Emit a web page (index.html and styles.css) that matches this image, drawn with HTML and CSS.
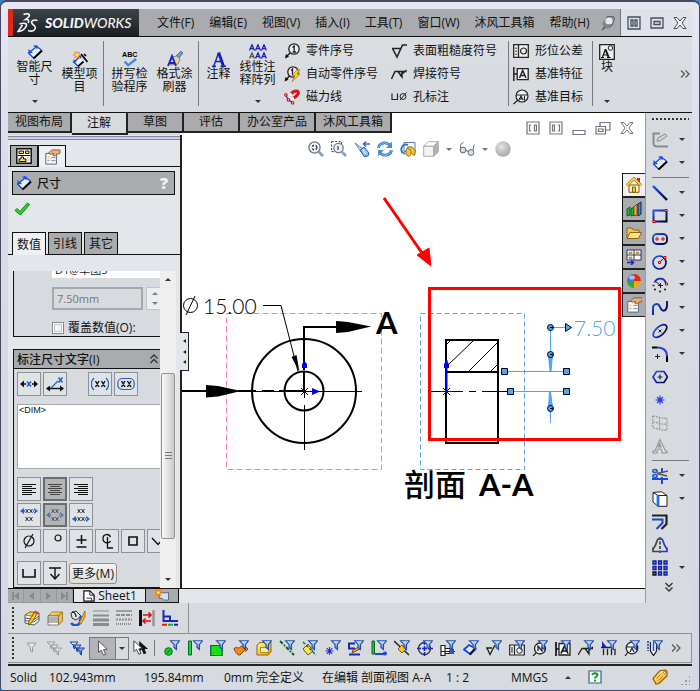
FILE: index.html
```html
<!DOCTYPE html>
<html lang="zh-CN">
<head>
<meta charset="utf-8">
<title>SOLIDWORKS - Sheet1</title>
<link rel="stylesheet" href="styles.css">
</head>
<body>
<svg class="sprite" aria-hidden="true">
  <defs>
    <linearGradient id="gold" x1="0" y1="0" x2="1" y2="1"><stop offset="0" stop-color="#fff3a0"/><stop offset="1" stop-color="#e3a21a"/></linearGradient>
    <linearGradient id="funnelFill" x1="0" y1="0" x2="0" y2="1"><stop offset="0" stop-color="#dff0ff"/><stop offset="1" stop-color="#3f74d0"/></linearGradient>
    <linearGradient id="navy" x1="0" y1="0" x2="1" y2="1"><stop offset="0" stop-color="#2a55e0"/><stop offset="0.6" stop-color="#0a1a9a"/><stop offset="1" stop-color="#000010"/></linearGradient>
    <radialGradient id="ball" cx="0.4" cy="0.35" r="0.7"><stop offset="0" stop-color="#e4e4e4"/><stop offset="1" stop-color="#a4a4a4"/></radialGradient>

    <symbol id="i-dim" viewBox="0 0 16 16"><path d="M2 8.500 8.500 2.500 14.500 6.500 7 14z" fill="#eef2fb"/><path d="M1 8.500 7 14.500M8.500 1.500l6 4.500" fill="none" stroke="#1c3fd6" stroke-width="1.200"/><path d="M6.500 14.500 15 6.500" fill="none" stroke="#000" stroke-width="2.200"/><path d="M3 8 9 3" fill="none" stroke="#1d4ff0" stroke-width="1.600"/><path d="M1.500 9.500V5l4.500 4zM10.500 1.500H6l4.500 4z" fill="#1d4ff0"/></symbol>
    <symbol id="i-model" viewBox="0 0 16 16"><path d="M2 11 8 6l4 5-5 4z" fill="#eef2fb"/><path d="M1 10.500 6 15M3 10l5-4" fill="none" stroke="#1c3fd6" stroke-width="1.300"/><path d="M1.500 11.500V8L5 11zM9.500 4.500H6L9 8z" fill="#1d4ff0"/><path d="M6 15.500 11.500 10.500M9 3l6.500 8M12 3l2 2" fill="none" stroke="#000" stroke-width="1.700"/><path d="M5 0v8M1 4h8M2 1l6 6M8 1 2 7" stroke="#ff6a00" stroke-width="1"/><circle cx="5" cy="4" r="1.700" fill="#ffe44d"/></symbol>
    <symbol id="i-spell" viewBox="0 0 18 18"><text x="0" y="7" font-size="8" font-family="Liberation Sans" font-weight="700">ABC</text><path d="M3 12l4 4 9-7" fill="none" stroke="#4a86e0" stroke-width="2.600"/></symbol>
    <symbol id="i-paint" viewBox="0 0 16 16"><path d="M14 0 16 2 12 7 9 5z" fill="#6aa5c8" stroke="#336" stroke-width=".6"/><path d="M5 6l5-1 3 3-2 5-8 1z" fill="#e8cfa8" stroke="#86745a" stroke-width=".8"/><path d="M1 15 5 5l4 10M2.500 12h5" fill="none" stroke="#1428c8" stroke-width="1.900"/></symbol>
    <symbol id="i-note" viewBox="0 0 16 16"><path d="M1 15.200h4M9.500 15.200H15M2.800 15 7.500 2M4.500 10.500h6" fill="none" stroke="#1a22b8" stroke-width="1.400"/><path d="M7.600 1.500l4.800 13.500" stroke="#1a22b8" stroke-width="3"/></symbol>
    <symbol id="i-aaa" viewBox="0 0 18 16"><path d="M.5 6.500 3 .8l2.400 5.700M1.500 4.600h3M6.500 6.500 9 .8l2.400 5.700M7.500 4.600h3M12.500 6.500 15 .8l2.400 5.700M13.500 4.600h3" fill="none" stroke="#1a22b8" stroke-width="1.300"/><path d="M.5 14.500 3 8.800l2.400 5.700M1.500 12.600h3" fill="none" stroke="#555" stroke-width="1.300"/><path d="M6.500 14.500 9 8.800l2.400 5.700M7.500 12.600h3M12.500 14.500 15 8.800l2.400 5.700M13.500 12.600h3" fill="none" stroke="#1a22b8" stroke-width="1.300"/></symbol>
    <symbol id="i-balloon" viewBox="0 0 16 16"><circle cx="10" cy="6" r="5.200" fill="#eee" stroke="#222" stroke-width="1.300"/><path d="M8.500 4.500 10.200 3v6M8.500 9h3.500" fill="none" stroke="#222" stroke-width="1.300"/><path d="M6 10l-4 4" stroke="#222" stroke-width="1.400"/><path d="M1 15.500 2 11l3 2.800z" fill="#111"/></symbol>
    <symbol id="i-autob" viewBox="0 0 16 16"><circle cx="9" cy="6" r="5.200" fill="#eee" stroke="#222" stroke-width="1.300"/><path d="M7 4.500 8.500 3v6" fill="none" stroke="#222" stroke-width="1.300"/><path d="M5.500 10l-4 4" stroke="#222" stroke-width="1.400"/><path d="M.5 15.500 1.500 11l3 2.800z" fill="#111"/><path d="M13 4 8 9.500h3L8 15.500l8-7.500h-3l3-4z" fill="#ffd42a" stroke="#a06a00" stroke-width=".7"/></symbol>
    <symbol id="i-magnet" viewBox="0 0 16 16"><path d="M7 5C10 1 15.500 1 14 5c-1 2.500-3 3.500-5 4.500" fill="none" stroke="#d8141c" stroke-width="3.200"/><path d="M5.500 6.500 7.500 4.500M7.500 10.500l2.500-1.500" stroke="#eee" stroke-width="3"/><path d="M2 6.500 4.500 11l4 2.500" fill="none" stroke="#1428c8" stroke-width="1.200"/><path d="M.8 4.800h2.200v2.200H.8zM3.300 9.800h2.200v2.200H3.300zM7.500 12.800h2.200v2.200H7.500z" fill="#fff" stroke="#c00" stroke-width="1"/></symbol>
    <symbol id="i-surf" viewBox="0 0 16 16"><path d="M1 5.500h9M1.500 5.500 6 14l5.500-12H16" fill="none" stroke="#222" stroke-width="1.600"/></symbol>
    <symbol id="i-weld" viewBox="0 0 16 16"><path d="M.5 13 4 5.500h11.500M7 5.500 11 11V5.500M9 10 15.500 4" fill="none" stroke="#222" stroke-width="1.500"/></symbol>
    <symbol id="i-hole" viewBox="0 0 16 16"><path d="M1 4.500v6h5.500v-6" fill="none" stroke="#222" stroke-width="1.200"/><circle cx="12" cy="7.500" r="2.900" fill="none" stroke="#222"/><path d="M9 11 15.500 3.500" stroke="#222"/></symbol>
    <symbol id="i-gtol" viewBox="0 0 16 16"><path d="M.7 1.700h14.600v12.600H.7zM5.500 2v12" fill="#f3f3f3" stroke="#222" stroke-width="1.300"/><path d="M3.100 4.500v1.500M3.100 7.500V9M3.100 10.500V12" stroke="#222" stroke-width="1.200"/><circle cx="10.500" cy="8" r="3" fill="none" stroke="#222" stroke-width="1.200"/></symbol>
    <symbol id="i-datum" viewBox="0 0 16 16"><path d="M4.200 2.700h11v11h-11z" fill="#f3f3f3" stroke="#222" stroke-width="1.300"/><path d="M.8 1v14M1 8h3M6.500 12 9.700 4.500 13 12M7.500 9.500h4.500" fill="none" stroke="#222" stroke-width="1.500"/></symbol>
    <symbol id="i-target" viewBox="0 0 16 16"><circle cx="9" cy="7" r="6" fill="#f0f0f0" stroke="#222" stroke-width="1.200"/><path d="M3 6h12M6 11 8 7l2 4M6.500 10h3M11.500 7v4.500M5 11l-4.500 4" fill="none" stroke="#222" stroke-width="1.200"/></symbol>
    <symbol id="i-block" viewBox="0 0 16 16"><path d="M.7.7h14.600v14.600H.7z" fill="#eee" stroke="#222" stroke-width="1.300"/><circle cx="11.500" cy="4" r="2.300" fill="none" stroke="#222"/><path d="M2 13.500h3M8 13.500h3.500M3.500 13 6.500 5M4.500 11h4" stroke="#111" stroke-width="1.200"/><path d="M6.500 5.500 9.500 13" stroke="#111" stroke-width="2"/></symbol>

    <symbol id="i-pin" viewBox="0 0 16 16"><ellipse cx="6.500" cy="9" rx="5" ry="4.500" fill="#82838f"/><path d="M6 1.500h6.500l1 2.500-2 6H8L5 6z" fill="#8d8e9c" stroke="#555563" stroke-width=".8"/><circle cx="8" cy="6" r="3.600" fill="#e6e6ee"/><path d="M4 12l-3 3" stroke="#555563" stroke-width="1.500"/></symbol>
    <symbol id="w-split" viewBox="0 0 14 14"><path d="M1 1h12v12H1zM4 4h2v6H4zM8 4h2v6H8z" fill="none" stroke="currentColor" stroke-width="1.300"/></symbol>
    <symbol id="w-left" viewBox="0 0 14 14"><path d="M1 1h12v12H1zM8.500 4h2v6h-2zM5 4H3.500v6H5" fill="none" stroke="currentColor" stroke-width="1.200"/></symbol>
    <symbol id="w-right" viewBox="0 0 14 14"><path d="M1 1h12v12H1zM3.500 4h2v6h-2zM9 4h1.500v6H9" fill="none" stroke="currentColor" stroke-width="1.200"/></symbol>
    <symbol id="w-max" viewBox="0 0 14 14"><path d="M1 2h12v10H1zM4 5.500h6v3H4z" fill="none" stroke="currentColor" stroke-width="1.300"/></symbol>
    <symbol id="w-close" viewBox="0 0 14 14"><path d="M1 1.500h3L7 5l3-3.500h3L9 7l4 5.500h-3L7 9l-3 3.500H1L5 7z" fill="#f4f5f8" stroke="currentColor" stroke-width="1"/></symbol>
    <symbol id="w-min" viewBox="0 0 14 14"><path d="M1 9.500h12v4H1z" fill="#fff" stroke="currentColor" stroke-width="1.200"/></symbol>
    <symbol id="w-rest" viewBox="0 0 16 14"><path d="M5 6V1.500h10V9h-4M1 5.500h9.500V13H1zM3.500 8h4.500v2.500H3.500z" fill="none" stroke="currentColor" stroke-width="1.200"/></symbol>

    <symbol id="v-fit" viewBox="0 0 16 16"><circle cx="6.500" cy="6.500" r="5.600" fill="#eef2f6" stroke="#6e7680" stroke-width="1.300"/><circle cx="6.500" cy="6.500" r="2.300" fill="none" stroke="#333" stroke-width="1.400" stroke-dasharray="2 1.600"/><path d="M10.500 10.500 15 15" stroke="#7da0d0" stroke-width="2.800"/></symbol>
    <symbol id="v-area" viewBox="0 0 16 16"><path d="M.6.600h10v10h-10z" fill="none" stroke="#333" stroke-dasharray="2 1.500"/><circle cx="7.500" cy="7" r="4.700" fill="#eef2f6" stroke="#6e7680" stroke-width="1.300"/><path d="M7 5v4" stroke="#445" stroke-width="1.300"/><path d="M11 11l4 4" stroke="#7da0d0" stroke-width="2.600"/></symbol>
    <symbol id="v-prev" viewBox="0 0 16 16"><path d="M1 2 9 8l-2 3z" fill="#cfe6fa" stroke="#4b7ab8" stroke-width=".9"/><path d="M6 9l4-3 5 6-1 3-4 .5z" fill="#8cc0ee" stroke="#305f9c"/><path d="M9 9l3 4" stroke="#fff"/><path d="M16 3H10M12 .5 9.500 3 12 5.500" fill="none" stroke="#2f6dd0" stroke-width="1.600"/></symbol>
    <symbol id="v-redraw" viewBox="0 0 16 16"><path d="M1.500 7C2 2 9 0 13 4M14.500 9C14 14 7 16 3 12" fill="none" stroke="#3a78c4" stroke-width="2.800"/><path d="M1.500 7C2 2 9 0 13 4M14.500 9C14 14 7 16 3 12" fill="none" stroke="#8fc1f0" stroke-width="1"/><path d="M15 .5V7H9zM1 15.500V9h6z" fill="#4f8cd4"/></symbol>
    <symbol id="v-3d" viewBox="0 0 16 16"><path d="M4 1.500h11v9H4z" fill="#f6f9fd" stroke="#5c7ca8"/><path d="M8 4C3 2 0 7 2 11l3 2" fill="none" stroke="#3a78c4" stroke-width="2"/><path d="M6 9l2-3 4 0 3.500 4-1 4.500-3-2-2.500 3-3-2z" fill="#f2c544" stroke="#8c6a10"/><path d="M8 8l3 1v4" fill="none" stroke="#8c6a10" stroke-width=".8"/></symbol>
    <symbol id="v-cube" viewBox="0 0 16 16"><path d="M.7 5h10v10.300H.7z" fill="#f4f4f4" stroke="#aaa"/><path d="M.7 5 5 .7h10.300L10.700 5z" fill="#fff" stroke="#aaa"/><path d="M10.700 5 15.300.7V11l-4.600 4.300z" fill="#b2b2b2" stroke="#aaa"/></symbol>
    <symbol id="v-eye" viewBox="0 0 16 16"><circle cx="4" cy="9" r="2.900" fill="#d2e2f0" stroke="#666"/><circle cx="12" cy="11.500" r="2.900" fill="#d2e2f0" stroke="#666"/><path d="M1.500 7.500C1 4 2.500 2 4.500 1.500M14 9c1-3 0-4 2-5.500M7 9.500l2.500 1" fill="none" stroke="#666"/></symbol>
    <symbol id="v-ball" viewBox="0 0 16 16"><circle cx="8" cy="8" r="7.700" fill="url(#ball)"/></symbol>

    <symbol id="p-tree" viewBox="0 0 16 16"><path d="M.8.800h14.400v14.400H.8z" fill="#fff" stroke="#111" stroke-width="1.500"/><path d="M3 3h4.500v2.500H3zM9.500 3H13v2.500H9.500zM5 9h2.500v2H10v2.500H3V11h2z" fill="#ffe14a" stroke="#111"/><path d="M2 7.500h12" stroke="#111"/><path d="M11 9h2.500v4.500H11z" fill="#cde"/></symbol>
    <symbol id="p-prop" viewBox="0 0 18 18"><path d="M2 5h12v12H2z" fill="#f4f6fa" stroke="#4a5a80"/><path d="M4 8.500h2v2H4z" fill="#fc3"/><path d="M4 13h2M8 9.500h5M8 13h5" stroke="#888"/><path d="M5 4.500 9 1l9 0v4l-4 1-2 2-2-1 1-2-4 1z" fill="#e8b27a" stroke="#7a4a1c" stroke-width=".9"/></symbol>
    <symbol id="p-ok" viewBox="0 0 16 14"><path d="M1 8.500 3 6.500l3 3L13.500 1l2 1.500L6.500 13z" fill="#22e322" stroke="#0c7a0c"/></symbol>

    <symbol id="b-x1" viewBox="0 0 18 16"><path d="M1 8h5M12 8h5" stroke="#111" stroke-width="1.700"/><path d="M0 8l4-3.500v7zM18 8l-4-3.500v7z" fill="#111"/><path d="M7 5.500l4 5M11 5.500l-4 5" stroke="#2563c8" stroke-width="1.700"/></symbol>
    <symbol id="b-x2" viewBox="0 0 18 16"><path d="M1 12.500h16" stroke="#111" stroke-width="1.500"/><path d="M0 12.500 4 9.500v6zM18 12.500l-4-3v6z" fill="#111"/><path d="M5 12l7-7" stroke="#2563c8" stroke-width="1.200"/><path d="M12.500 1.500l4 5M16.500 1.500l-4 5" stroke="#2563c8" stroke-width="1.600"/></symbol>
    <symbol id="b-par" viewBox="0 0 18 16"><path d="M4.500 5l3.500 6M8 5l-3.500 6M10.500 5l3.500 6M14 5l-3.500 6" stroke="#111" stroke-width="1.400"/><path d="M3 2C-.5 5-.5 11 3 14M15 2c3.500 3 3.500 9 0 12" fill="none" stroke="#2563c8" stroke-width="1.200"/></symbol>
    <symbol id="b-box" viewBox="0 0 18 16"><path d="M4.500 5l3.500 6M8 5l-3.500 6M10.500 5l3.500 6M14 5l-3.500 6" stroke="#111" stroke-width="1.400"/><rect x=".8" y="2.500" width="16.400" height="11" rx="4.500" fill="none" stroke="#2563c8" stroke-width="1.200"/></symbol>
    <symbol id="b-al" viewBox="0 0 16 16"><path d="M1 3.500h14M1 5.500h10M1 7.500h14M1 9.500h10M1 11.500h14M1 13.500h10" stroke="#111"/></symbol>
    <symbol id="b-ac" viewBox="0 0 16 16"><path d="M1 3.500h14M3 5.500h10M1 7.500h14M3 9.500h10M1 11.500h14M3 13.500h10" stroke="#444"/></symbol>
    <symbol id="b-ar" viewBox="0 0 16 16"><path d="M1 3.500h14M5 5.500h10M1 7.500h14M5 9.500h10M1 11.500h14M5 13.500h10" stroke="#111"/></symbol>
    <symbol id="b-xx" viewBox="0 0 8 5"><path d="M.5.500l3 4M3.500.5l-3 4M4.500.5l3 4M7.500.5l-3 4" stroke="#222" stroke-width=".9"/></symbol>
    <symbol id="b-arrows" viewBox="0 0 18 6"><path d="M0 3 4 0v6zM18 3l-4-3v6zM3 2.300h2v1.400H3zM13 2.300h2v1.400h-2z" fill="#1f5fd0"/></symbol>
    <symbol id="b-vt" viewBox="0 0 18 16"><use href="#b-arrows" y="1" width="18" height="6"/><use href="#b-xx" x="5" y="1.500" width="8" height="5"/><use href="#b-xx" x="5" y="9.500" width="8" height="5"/></symbol>
    <symbol id="b-vm" viewBox="0 0 18 16"><g opacity=".7"><use href="#b-arrows" y="5" width="18" height="6"/><use href="#b-xx" x="5" y="1.500" width="8" height="5"/><use href="#b-xx" x="5" y="9.500" width="8" height="5"/></g></symbol>
    <symbol id="b-vb" viewBox="0 0 18 16"><use href="#b-arrows" y="9" width="18" height="6"/><use href="#b-xx" x="5" y="1.500" width="8" height="5"/><use href="#b-xx" x="5" y="9.500" width="8" height="5"/></symbol>
    <symbol id="s-dia" viewBox="0 0 16 16"><circle cx="8" cy="8" r="5" fill="none" stroke="#111" stroke-width="1.200"/><path d="M4 15 12 1" stroke="#111" stroke-width="1.200"/></symbol>
    <symbol id="s-deg" viewBox="0 0 16 16"><circle cx="11" cy="5" r="3" fill="none" stroke="#111" stroke-width="1.200"/></symbol>
    <symbol id="s-pm" viewBox="0 0 16 16"><path d="M3.500 7h10M8.500 2v9M3.500 14h10" stroke="#111" stroke-width="1.500"/></symbol>
    <symbol id="s-cl" viewBox="0 0 16 16"><path d="M11.500 4C10 .5 4 .5 4 5.500S10 11 11.500 8M8.500 4v11H14" fill="none" stroke="#111" stroke-width="1.300"/></symbol>
    <symbol id="s-sq" viewBox="0 0 16 16"><path d="M4 4h8v8H4z" fill="none" stroke="#111" stroke-width="1.600"/></symbol>
    <symbol id="s-vee" viewBox="0 0 16 16"><path d="M1 5l6 6.500L13 5" fill="none" stroke="#111" stroke-width="1.400"/></symbol>
    <symbol id="s-cb" viewBox="0 0 16 16"><path d="M2 4v8h12V4" fill="none" stroke="#111" stroke-width="1.600"/></symbol>
    <symbol id="s-dp" viewBox="0 0 16 16"><path d="M2 3h12M8 3v11M3.500 9 8 14l4.500-5" fill="none" stroke="#111" stroke-width="1.400"/></symbol>

    <symbol id="t-house" viewBox="0 0 16 16"><path d="M11 1h3v6h-3z" fill="#c22"/><path d="M3 8h10v7.300H3z" fill="#fff4c0" stroke="#8a5a00"/><path d="M.7 8.500 8 1.500l7.300 7" fill="none" stroke="#b07800" stroke-width="2.800"/><path d="M.7 8.500 8 1.500l7.300 7" fill="none" stroke="#ffe05a" stroke-width="1.300"/><path d="M6.500 10h3v5.300h-3z" fill="#ffc83c" stroke="#8a5a00"/></symbol>
    <symbol id="t-books" viewBox="0 0 16 16"><path d="M1 8l3-2v8l-3 1zM5 8l3-2v8l-3 1z" fill="#25b525" stroke="#063"/><path d="M8 6l3-3v11l-3 1z" fill="#f0c028" stroke="#741"/><path d="M12 3l3-2v12l-3 2z" fill="#4a86e0" stroke="#124"/></symbol>
    <symbol id="t-folder" viewBox="0 0 16 16"><path d="M1 13V3h5l1.500 2H13v3" fill="#f0c860" stroke="#8c6410"/><path d="M1 13.500 4 7.500h11.500l-3 6z" fill="#ffe28a" stroke="#8c6410"/></symbol>
    <symbol id="t-view" viewBox="0 0 16 16"><path d="M1 1h14v10H1zM8 1v10M1 6h14" fill="#fff" stroke="#335"/><path d="M3 3h3v1.500H3zM10 3h3v1.500h-3zM3 8h3v1.500H3z" fill="#ffd21f" stroke="#650" stroke-width=".5"/><path d="M0 11.500h8v4.500H0z" fill="#a9abae"/><path d="M1 13.500h6M5 11l2.500 2.500L5 16" fill="none" stroke="#1428c8" stroke-width="1.600"/></symbol>
    <symbol id="t-ball" viewBox="0 0 16 16"><path d="M8 8V1a7 7 0 0 0-7 7z" fill="#3b78e0"/><path d="M8 8h7a7 7 0 0 0-7-7z" fill="#e02a1c"/><path d="M8 8H1a7 7 0 0 0 7 7z" fill="#2fa82f"/><path d="M8 8v7a7 7 0 0 0 7-7z" fill="#f0a81c"/><ellipse cx="6" cy="4.500" rx="3" ry="2" fill="#fff" opacity=".55"/></symbol>

    <symbol id="r-sketch" viewBox="0 0 16 16"><path d="M8 1.500H1.500V11c0 3 2 3.500 4 3.500H16" fill="none" stroke="#8a8a8a" stroke-width="2"/><path d="M5 9l1-3 7-4 2 2-7 5z" fill="#d6d6d6" stroke="#8a8a8a"/></symbol>
    <symbol id="r-line" viewBox="0 0 16 16"><path d="M1 1l14 14" stroke="url(#navy)" stroke-width="2.400"/></symbol>
    <symbol id="r-rect" viewBox="0 0 16 16"><path d="M1.500 2.500h13v11h-13z" fill="none" stroke="url(#navy)" stroke-width="2"/><path d="M13 1.500h2v2h-2zM1 12.500h2v2H1z" fill="#fff" stroke="#c00"/></symbol>
    <symbol id="r-slot" viewBox="0 0 16 16"><rect x="1" y="3" width="14" height="10" rx="4" fill="none" stroke="url(#navy)" stroke-width="1.900"/><path d="M4 7h2v2H4zM10 7h2v2h-2z" fill="#fff" stroke="#c00"/></symbol>
    <symbol id="r-circ" viewBox="0 0 16 16"><circle cx="7.500" cy="8.500" r="6.500" fill="none" stroke="url(#navy)" stroke-width="1.700"/><path d="M7 9l5-5" stroke="#222"/><path d="M6.500 7.500h2v2h-2zM12 2.500h2v2h-2z" fill="#fff" stroke="#c00"/></symbol>
    <symbol id="r-arc" viewBox="0 0 16 16"><path d="M2.500 5.500C5 0 13 0 14 7" fill="none" stroke="#1428c8" stroke-width="1.800"/><path d="M3 4l5 4" stroke="#222"/><path d="M6 8.500h5M8.500 6v5" stroke="#222"/><path d="M.5 8.500h2M2 12.500h2M7 14.500h2M12 12.500h2M3 11.500v2M8 13.500v2M13 11.500v2" fill="none" stroke="#333" stroke-width="1.300"/><path d="M13.500 6h2v2h-2z" fill="#fff" stroke="#c00"/></symbol>
    <symbol id="r-spl" viewBox="0 0 16 16"><path d="M1 15V8C1 4 6 2 8 7s6 5 7-1V1" fill="none" stroke="url(#navy)" stroke-width="2"/></symbol>
    <symbol id="r-ell" viewBox="0 0 16 16"><ellipse cx="8" cy="8" rx="8.300" ry="4.200" transform="rotate(-42 8 8)" fill="none" stroke="url(#navy)" stroke-width="1.700"/><path d="M6.500 6.500l3 3M9.500 6.500l-3 3" stroke="#222"/></symbol>
    <symbol id="r-fil" viewBox="0 0 16 16"><path d="M0 1.500h5M15 10v6" stroke="#000" stroke-width="2"/><path d="M5 1.500c6 0 10 3 10 9" fill="none" stroke="#2a3fe0" stroke-width="2"/><path d="M3 10.500h5M5.500 8v5" stroke="#222"/></symbol>
    <symbol id="r-poly" viewBox="0 0 16 16"><path d="M4.500 2.500h7.500L15.500 8 12 13.500H4.500L1 8z" fill="none" stroke="url(#navy)" stroke-width="1.700"/><path d="M5.500 8h5M8 5.500v5" stroke="#222" stroke-width="1.200"/></symbol>
    <symbol id="i-star" viewBox="0 0 16 16"><path d="M8 3.500v9M3.500 8h9M5 5l6 6M11 5l-6 6" stroke="#2430e0" stroke-width="1.100"/></symbol>
    <symbol id="r-grid" viewBox="0 0 16 16"><path d="M.7 1C6 1 8 4 15 3v12c-7 1-9-2-14.300-2zM7.500 2.500v12M.7 7C6 7 8 10 15 9" fill="none" stroke="#999" stroke-width="1.200" stroke-dasharray="2 1"/></symbol>
    <symbol id="r-text" viewBox="0 0 16 16"><path d="M1 13h2L8 1.500 13.500 13H15v2h-5v-2l-1-2H6l-1 2v2H1zM6.500 9h2.500L7.700 5.500z" fill="#e2e2e2" stroke="#929292" stroke-width="1.100"/></symbol>
    <symbol id="r-trim" viewBox="0 0 16 16"><path d="M10 0v5M10 9v7M0 11h16" stroke="#1d45e0" stroke-width="2"/><path d="M5 5.500 16 3M5 5.500 15 8" stroke="#555" stroke-width="1.600"/><ellipse cx="3" cy="3" rx="2.200" ry="1.500" fill="none" stroke="#1560b8" stroke-width="1.500"/><ellipse cx="3" cy="8" rx="2.200" ry="1.500" fill="none" stroke="#1560b8" stroke-width="1.500"/></symbol>
    <symbol id="r-conv" viewBox="0 0 16 16"><path d="M1 1.500 9.500.700 15 4.500v10.800H6L1 11z" fill="#fff" stroke="#222"/><path d="M1 1.500 6 4.500h9M6 4.500v10.800" fill="none" stroke="#222"/><path d="M6 4.500v10.500" stroke="#1d6fe8" stroke-width="2.800"/></symbol>
    <symbol id="r-off" viewBox="0 0 16 16"><path d="M0 1.500h14.500V10L9.500 15" fill="none" stroke="#222" stroke-width="2.200"/><path d="M0 5.500h10.500V9l-6 6" fill="none" stroke="#1d45d0" stroke-width="2"/></symbol>
    <symbol id="r-mir" viewBox="0 0 16 16"><path d="M7 1.500C4 2 5 9 1 11.500v3h6" fill="none" stroke="#444" stroke-width="1.700"/><path d="M9 1.500c3 .5 2 7.500 6 10v3H9" fill="none" stroke="#2337d8" stroke-width="1.700"/><path d="M8 0v16" stroke="#111" stroke-width="1.300" stroke-dasharray="3 1.500"/></symbol>
    <symbol id="r-pat" viewBox="0 0 16 16"><path d="M1 1h3v3H1zM6.500 1h3v3h-3zM12 1h3v3h-3zM1 6.500h3v3H1zM6.500 6.500h3v3h-3zM12 6.500h3v3h-3zM6.500 12h3v3h-3zM12 12h3v3h-3z" fill="#6c84f0" stroke="#10189c" stroke-width="1.300"/><path d="M1 12h3v3H1z" fill="#777" stroke="#111" stroke-width="1.300"/></symbol>

    <symbol id="l-edit" viewBox="0 0 16 16"><path d="M1 5l5-3 9 1v8l-5 4-9-2z" fill="#fff" stroke="#555"/><path d="M1 5l9 1.500 5-3.500-9-1z" fill="url(#gold)" stroke="#8c6a10" stroke-width=".8"/><path d="M1 8l9 1.500L15 6M1 10.500 10 12l5-4" fill="none" stroke="#555"/><path d="M11 1l3 1.500-7 11-2.500 1.500.3-3.500z" fill="#ffc21f" stroke="#7a4a00" stroke-width=".9"/><path d="M11 1l3 1.500-1 2-3-1.500z" fill="#e05030"/></symbol>
    <symbol id="l-stack" viewBox="0 0 16 16"><path d="M1 6l4-4h10.500l-4 4z" fill="url(#gold)" stroke="#8c6a10" stroke-width=".8"/><path d="M1 6h10.500v9H1z" fill="#fff" stroke="#666" stroke-width=".8"/><path d="M1 8h10M1 10h10M1 12h10" stroke="#666"/><path d="M11.500 6l4-4v9l-4 4z" fill="#e8c35a" stroke="#8c6a10" stroke-width=".8"/></symbol>
    <symbol id="l-color" viewBox="0 0 16 16"><path d="M1 3l5-2 5 5-5 4-4-2z" fill="#e4e6ea" stroke="#333"/><path d="M2 2c3 0 4 3 4 5" fill="none" stroke="#222" stroke-width="1.400"/><path d="M1 13c3 4 10 2 9-2l1-5" fill="none" stroke="#1d55e0" stroke-width="2.600"/><path d="M15 1 9 13l2 1 4-7z" fill="#f5b623" stroke="#8a5a00" stroke-width=".7"/></symbol>
    <symbol id="l-width" viewBox="0 0 16 16"><path d="M0 1h16" stroke="#8b8b8b" stroke-width="1"/><path d="M0 5.500h16" stroke="#8b8b8b" stroke-width="2"/><path d="M0 10h16M0 14.500h16" stroke="#8b8b8b" stroke-width="3"/></symbol>
    <symbol id="l-style" viewBox="0 0 16 16"><path d="M0 1h16" stroke="#8b8b8b" stroke-width="1.500"/><path d="M0 5h16" stroke="#8b8b8b" stroke-width="2" stroke-dasharray="4 1"/><path d="M0 9.500h16" stroke="#8b8b8b" stroke-width="2" stroke-dasharray="2 1"/><path d="M0 14h16" stroke="#8b8b8b" stroke-width="2" stroke-dasharray="1 1"/></symbol>
    <symbol id="l-hide" viewBox="0 0 16 16"><path d="M1.500 0v16" stroke="#111" stroke-width="3"/><path d="M14.500 0v16" stroke="#999" stroke-width="2.600"/><path d="M4 5h8M9.500 2.500 12 5 9.500 7.500M12 11H4M6.500 8.500 4 11l2.500 2.500" fill="none" stroke="#d11" stroke-width="1.700"/></symbol>
    <symbol id="l-disp" viewBox="0 0 16 16"><path d="M1.500 0v11H16M1.500 6.500H8V11" fill="none" stroke="#1428c8" stroke-width="2"/><path d="M0 14.800h5" stroke="#e11" stroke-width="2"/><path d="M6 14.800h5" stroke="#1b1" stroke-width="2"/><path d="M12 14.800h4" stroke="#12e" stroke-width="2"/></symbol>

    <symbol id="funnel" viewBox="0 0 16 16"><path d="M6.500.700h9L12.500 4.500v5L10 7.500v-3z" fill="url(#funnelFill)" stroke="#2450a8" stroke-width="1.100"/></symbol>
    <symbol id="g-f1" viewBox="0 0 16 16"><path d="M4 3h9L9.500 7.500V12L7.500 11V7.500z" fill="#e6e6e6" stroke="#999"/></symbol>
    <symbol id="g-f2" viewBox="0 0 16 16"><path d="M1 2h8L6 5.500V9L4.500 8V5.500zM4 5h8L9 8.500V12l-1.500-1V8.500zM7 8h8.500l-3 3V15L11 14v-3z" fill="#e6e6e6" stroke="#999"/></symbol>
    <symbol id="g-f3" viewBox="0 0 16 16"><path d="M1 2h8L6 5.500V9L4.500 8V5.500zM4 5h8L9 8.500V12l-1.500-1V8.500zM7 8h8.500l-3 3V15L11 14v-3z" fill="url(#funnelFill)" stroke="#1c3f9c"/></symbol>
    <symbol id="g-cur" viewBox="0 0 16 18"><path d="M3 1v13l3-2.500L8.500 17l2.500-1-2.500-5 4-.5z" fill="#fff" stroke="#444"/></symbol>
    <symbol id="g-cur2" viewBox="0 0 18 18"><path d="M7 1v12l3-2 2 5 3-1-2-5h4z" fill="#111"/><path d="M1 1v12l3-2.500L6.500 16l2.500-1-2.500-5 4-.5z" fill="#fff" stroke="#333"/></symbol>

    <symbol id="f1" viewBox="0 0 16 16"><circle cx="4.500" cy="11.500" r="3.800" fill="#1fc81f" stroke="#063"/><path d="M3 13l3-3" stroke="#063"/></symbol>
    <symbol id="f2" viewBox="0 0 16 16"><path d="M1.500 1h3v14h-3z" fill="#2bd42b" stroke="#063"/></symbol>
    <symbol id="f3" viewBox="0 0 16 16"><path d="M.7 5.500h11.500v10H.7z" fill="#16e016" stroke="#063" stroke-width="1.200"/></symbol>
    <symbol id="f4" viewBox="0 0 16 16"><path d="M1 9c2-4 4 1 6-2l4-2 4 4c-2 4-4 0-5 3l-3 3c-3 0-4-2-6-6z" fill="#f58a1c" stroke="#8a4400"/></symbol>
    <symbol id="f5" viewBox="0 0 16 16"><path d="M1 5l3-2.500h11V12l-3 3H1zM4 8h8v5" fill="url(#gold)" stroke="#9c6400"/><path d="M4.500 7.500h8v5h-8z" fill="#fff0a8" stroke="#b98a1c"/></symbol>
    <symbol id="f6" viewBox="0 0 16 16"><path d="M1 1l14 14" stroke="#062" stroke-width="2" stroke-dasharray="4 1.500 1.500 1.500"/></symbol>
    <symbol id="f7" viewBox="0 0 16 16"><path d="M1 9 6 4l5 7-5 4z" fill="#ffe83a" stroke="#555"/><path d="M1 2l13 13" stroke="#063" stroke-width="1.300" stroke-dasharray="3 1.500"/></symbol>
    <symbol id="f8" viewBox="0 0 16 16"><path d="M4.500 7v8M.5 11h8M1.700 8.200l5.600 5.600M7.300 8.200l-5.600 5.600" stroke="#2430e0" stroke-width="1.100"/></symbol>
    <symbol id="f9" viewBox="0 0 16 16"><path d="M7 3.500H1v5h6M1 14.500h11" fill="none" stroke="#1428c8" stroke-width="2"/><path d="M4 13l1-3 6-3 1 2z" fill="#ffb21f" stroke="#7a4a00"/></symbol>
    <symbol id="f10" viewBox="0 0 16 16"><path d="M1 1h2.500v13H1z" fill="#1fc81f" stroke="#063"/><path d="M4 14h10" stroke="#1d45e0" stroke-width="2"/><circle cx="14" cy="13.500" r="2" fill="#1d45e0"/></symbol>
    <symbol id="f11" viewBox="0 0 16 16"><path d="M0 1l15 14" stroke="#222" stroke-width="1.500"/><path d="M8 5l4 4-4 4-4-4z" fill="#ffc21f" stroke="#8a5a00"/></symbol>
    <symbol id="f12" viewBox="0 0 16 16"><circle cx="7.500" cy="8.500" r="6" fill="none" stroke="#333" stroke-width="1.300"/><path d="M0 8.500h4M5 8.500h5M11 8.500h5M7.500 1v4M7.500 6v5M7.500 12v4" stroke="#1428c8" stroke-width="1.500"/></symbol>
    <symbol id="f13" viewBox="0 0 16 16"><path d="M1 11.500h14M1 5.500h4v10H1zM5 8.500h5v5H5z" fill="#fff" stroke="#222" stroke-width="1.200"/><path d="M12 9v5" stroke="#1d55e0" stroke-width="4"/></symbol>
    <symbol id="f14" viewBox="0 0 16 16"><path d="M1 9.500 6 5l6 3-5 6z" fill="#e6ecfa" stroke="#1c3fe6" stroke-width="1.800"/><path d="M7 14.500 13 8" stroke="#111" stroke-width="2"/></symbol>
    <symbol id="f15" viewBox="0 0 16 16"><path d="M0 8h6M1 8l3 6.500L9 5" fill="none" stroke="#222" stroke-width="1.300"/></symbol>
    <symbol id="f16" viewBox="0 0 16 16"><path d="M.7 5h14.600v10H.7zM5.500 5v10M2 8h2M2 10h2M2 12h2" fill="#f3f3f3" stroke="#222" stroke-width="1.200"/><circle cx="10.500" cy="10.500" r="2.800" fill="none" stroke="#222"/></symbol>
    <symbol id="f17" viewBox="0 0 16 16"><circle cx="8" cy="8.500" r="5.500" fill="#eee" stroke="#222" stroke-width="1.300"/><path d="M6 11V6l4 5V6M4 13l-3 3" fill="none" stroke="#222" stroke-width="1.300"/></symbol>
    <symbol id="f18" viewBox="0 0 16 16"><path d="M4 3.500h11V15H4z" fill="#f3f3f3" stroke="#222" stroke-width="1.300"/><path d="M1 2v14M1 9h3M6 13.500 9.500 6l3.500 7.500M7.500 11h4" fill="none" stroke="#111" stroke-width="1.700"/></symbol>
    <symbol id="f19" viewBox="0 0 16 16"><path d="M0 15 4 8.500h11M7 8.500 11 14V8.500M9 12l6-5" fill="none" stroke="#222" stroke-width="1.300"/></symbol>
    <symbol id="f20" viewBox="0 0 16 16"><path d="M1 7.500V1l5 6.500z" fill="#1428c8"/><path d="M0 7.500h12M3 9c-2 2 1 4-1 6M7 9c-2 2 1 4-1 6M11 9c-2 2 1 4-1 6M14.500 9c-2 2 1 4-1 6" fill="none" stroke="#222" stroke-width="1.300"/></symbol>
    <symbol id="f21" viewBox="0 0 16 16"><circle cx="8" cy="8" r="5.800" fill="#f0f0f0" stroke="#222" stroke-width="1.300"/><path d="M2.500 7h11M6 12l2-4 2 4M4 12l-3 4" fill="none" stroke="#222" stroke-width="1.200"/></symbol>
    <symbol id="f22" viewBox="0 0 16 16"><path d="M1 1v10" stroke="#1428c8" stroke-width="1.400" stroke-dasharray="2 1"/><path d="M3.500 2v9l3 4.500 3-4.500V2" fill="#fff" stroke="#222" stroke-width="1.300"/><path d="M6.500 2v9" stroke="#1d55e0" stroke-width="1.600"/></symbol>
    <symbol id="q-sheet" viewBox="0 0 14 14"><path d="M1 1h7l5 5v7H1z" fill="#fff" stroke="#111" stroke-width="1.400"/><path d="M4 9.500h6v3.500M8 1v5h5" fill="none" stroke="#111"/></symbol>
    <symbol id="q-new" viewBox="0 0 16 14"><path d="M5 4h10v8h-5l-2-2H5z" fill="#cfe2f2" stroke="#567"/><path d="M4 0v8M0 4h8M1 1l6 6M7 1 1 7" stroke="#ff7a00" stroke-width="1.200"/><circle cx="4" cy="4" r="1.500" fill="#ffef60"/></symbol>
    <symbol id="q-help" viewBox="0 0 14 14"><path d="M1 1h12v12H1z" fill="#f4fbff" stroke="#2c6b78" stroke-width="1.200"/><path d="M4.500 5C4.500 2.500 9.500 2.500 9.500 5c0 1.500-2.500 1.500-2.500 3.500M7 9.700v1.800" fill="none" stroke="#19a019" stroke-width="2"/></symbol>
    <symbol id="q-tag" viewBox="0 0 16 16"><path d="M1 9.500 8 1.500l5.500-.5 1.500 1.500V7l-8 7.500-3 .5z" fill="url(#gold)" stroke="#9c5a00" stroke-width="1.200"/><path d="M4.500 9.500l4-4M6.500 11.500l4-4" stroke="#b97a10"/><circle cx="12.500" cy="3.500" r="1.100" fill="#fff" stroke="#9c5a00" stroke-width=".7"/></symbol>
    <symbol id="q-more" viewBox="0 0 10 8"><path d="M1 .5 4.500 4 1 7.500M5.500.5 9 4 5.500 7.500" fill="none" stroke="#555" stroke-width="1.200"/></symbol>
    <symbol id="q-down" viewBox="0 0 8 10"><path d="M.5 1 4 4.500 7.500 1M.5 5.500 4 9l3.500-3.500" fill="none" stroke="#333" stroke-width="1.300"/></symbol>
  </defs>
</svg>

<div class="window">
  <header class="titlebar">
    <div class="brand">
      <svg class="ds" viewBox="0 0 22 20" aria-hidden="true"><g fill="none" stroke="#f4f4f4" stroke-width="1.600"><path d="M6.500 1.500C12-.5 14 2 11 4.500L8.500 6.500c3-.5 4 1 2.500 3.500"/><path d="M2.500 11c6-2 9 0 5.500 4-2 2.500-4.500 3.500-7 3.500L5.500 12"/><path d="M20.500 7.500c-3.500-1.500-7 .5-5.500 3s4.500 2.500 3 5.500c-1 2-4 2.500-7 1.500"/></g></svg>
      <span class="brand-name"><b>SOLID</b>WORKS</span>
    </div>
    <nav class="menu" aria-label="菜单">
      <button>文件(F)</button><button>编辑(E)</button><button>视图(V)</button><button>插入(I)</button><button>工具(T)</button><button>窗口(W)</button><button>沐风工具箱</button><button>帮助(H)</button>
      <button class="pin" aria-label="固定"><svg class="ic"><use href="#i-pin"/></svg></button>
    </nav>
    <div class="winbtns">
      <button aria-label="分割"><svg class="wi"><use href="#w-split"/></svg></button>
      <button aria-label="最大化"><svg class="wi"><use href="#w-max"/></svg></button>
      <button aria-label="关闭"><svg class="wi"><use href="#w-close"/></svg></button>
    </div>
  </header>

  <section class="ribbon" aria-label="注解工具">
    <div class="rgroup">
      <button class="big"><svg class="ic"><use href="#i-dim"/></svg><span>智能尺寸</span><i class="caret"></i></button>
      <button class="big mid"><svg class="ic"><use href="#i-model"/></svg><span>模型项目</span></button>
    </div>
    <div class="rgroup">
      <button class="big mid"><svg class="ic wide"><use href="#i-spell"/></svg><span>拼写检验程序</span></button>
      <button class="big mid"><svg class="ic"><use href="#i-paint"/></svg><span>格式涂刷器</span></button>
    </div>
    <div class="rgroup">
      <button class="big mid slim"><svg class="ic"><use href="#i-note"/></svg><span>注释</span></button>
      <button class="big"><svg class="ic wide"><use href="#i-aaa"/></svg><span>线性注释阵列</span><i class="caret"></i></button>
      <div class="rlist">
        <button><svg class="ic"><use href="#i-balloon"/></svg>零件序号</button>
        <button><svg class="ic"><use href="#i-autob"/></svg>自动零件序号</button>
        <button><svg class="ic"><use href="#i-magnet"/></svg>磁力线</button>
      </div>
      <div class="rlist second">
        <button><svg class="ic"><use href="#i-surf"/></svg>表面粗糙度符号</button>
        <button><svg class="ic"><use href="#i-weld"/></svg>焊接符号</button>
        <button><svg class="ic"><use href="#i-hole"/></svg>孔标注</button>
      </div>
    </div>
    <div class="rgroup">
      <div class="rlist">
        <button><svg class="ic"><use href="#i-gtol"/></svg>形位公差</button>
        <button><svg class="ic"><use href="#i-datum"/></svg>基准特征</button>
        <button><svg class="ic"><use href="#i-target"/></svg>基准目标</button>
      </div>
    </div>
    <div class="rgroup last">
      <button class="big tiny"><svg class="ic"><use href="#i-block"/></svg><span>块</span><i class="caret"></i></button>
    </div>
    <button class="rmore" aria-label="更多"><svg><use href="#q-more"/></svg></button>
  </section>

  <main class="main">
    <div class="work">
      <div class="tabstrip">
        <div class="tabs">
          <button>视图布局</button><button class="on">注解</button><button>草图</button><button>评估</button><button>办公室产品</button><button>沐风工具箱</button>
        </div>
        <div class="docbtns">
          <button aria-label="左平铺"><svg class="wi"><use href="#w-left"/></svg></button>
          <button aria-label="右平铺"><svg class="wi"><use href="#w-right"/></svg></button>
          <button aria-label="最小化"><svg class="wi"><use href="#w-min"/></svg></button>
          <button aria-label="还原"><svg class="wi big-wi"><use href="#w-rest"/></svg></button>
          <button aria-label="关闭文档"><svg class="wi"><use href="#w-close"/></svg></button>
        </div>
      </div>

      <div class="stage">
        <aside class="panel">
          <div class="pm-rule"></div>
          <div class="pm-tabs">
            <button aria-label="特征树"><svg class="ic"><use href="#p-tree"/></svg></button>
            <button class="on" aria-label="属性"><svg class="ic wide"><use href="#p-prop"/></svg></button>
          </div>
          <h2 class="pm-title"><svg class="ic"><use href="#i-dim"/></svg>尺寸<button aria-label="帮助">?</button></h2>
          <button class="pm-ok" aria-label="确定"><svg><use href="#p-ok"/></svg></button>
          <div class="pm-sub"><button class="on">数值</button><button>引线</button><button>其它</button></div>
          <div class="pm-body">
            <div class="pm-view">
              <div class="grp first">
                <input class="name" type="text" aria-label="名称" value="D1@草图5">
                <div class="spin">
                  <input type="text" aria-label="数值" value="7.50mm" disabled>
                  <div class="steps"><button aria-label="增加"><i class="caret up"></i></button><button aria-label="减少"><i class="caret"></i></button></div>
                </div>
                <label class="check"><input type="checkbox">覆盖数值(O):</label>
              </div>
              <div class="grp second">
                <h3>标注尺寸文字(I)<svg><use href="#q-down"/></svg></h3>
                <div class="tools">
                  <div class="row split">
                    <button aria-label="居中尺寸"><svg class="ic wide"><use href="#b-x1"/></svg></button>
                    <button aria-label="引线尺寸"><svg class="ic wide"><use href="#b-x2"/></svg></button>
                    <button class="apart" aria-label="括号"><svg class="ic wide"><use href="#b-par"/></svg></button>
                    <button aria-label="检查"><svg class="ic wide"><use href="#b-box"/></svg></button>
                  </div>
                  <textarea aria-label="尺寸文字">&lt;DIM&gt;</textarea>
                  <div class="row">
                    <button aria-label="左对齐"><svg class="ic"><use href="#b-al"/></svg></button>
                    <button class="on" aria-label="居中"><svg class="ic"><use href="#b-ac"/></svg></button>
                    <button aria-label="右对齐"><svg class="ic"><use href="#b-ar"/></svg></button>
                  </div>
                  <div class="row">
                    <button aria-label="上"><svg class="ic wide"><use href="#b-vt"/></svg></button>
                    <button class="on" aria-label="中"><svg class="ic wide"><use href="#b-vm"/></svg></button>
                    <button aria-label="下"><svg class="ic wide"><use href="#b-vb"/></svg></button>
                  </div>
                  <div class="row">
                    <button aria-label="直径"><svg class="ic"><use href="#s-dia"/></svg></button>
                    <button aria-label="度"><svg class="ic"><use href="#s-deg"/></svg></button>
                    <button aria-label="正负"><svg class="ic"><use href="#s-pm"/></svg></button>
                    <button aria-label="中心线"><svg class="ic"><use href="#s-cl"/></svg></button>
                    <button aria-label="方形"><svg class="ic"><use href="#s-sq"/></svg></button>
                    <button aria-label="锥孔"><svg class="ic"><use href="#s-vee"/></svg></button>
                  </div>
                  <div class="row lastrow">
                    <button aria-label="柱孔"><svg class="ic"><use href="#s-cb"/></svg></button>
                    <button aria-label="深度"><svg class="ic"><use href="#s-dp"/></svg></button>
                    <button class="text">更多(M)</button>
                  </div>
                </div>
              </div>
            </div>
            <div class="scroll" aria-hidden="true"><i class="caret up"></i><div class="thumb"></div><i class="caret"></i></div>
          </div>
          <button class="grip" aria-label="折叠面板"><i></i><i></i><i></i></button>
        </aside>

        <div class="canvas">
          <svg class="drawing" width="463" height="453" viewBox="182 135 463 453" role="img" aria-label="工程图">
            <g fill="none" stroke="#ff7ab8" stroke-dasharray="6 3"><path d="M226.500 313.500h155v156h-155z"/></g>
            <g fill="none" stroke="#4da3f5" stroke-dasharray="5 3"><path d="M420.500 313.500h104v156h-104z"/></g>
            <g fill="none" stroke="#000" stroke-width="2">
              <circle cx="304" cy="391" r="52"/><circle cx="304" cy="391" r="19.500"/>
              <path d="M304 370V327h34M182 391h26M238 391h18"/>
              <path d="M304 371v20M262 391h12M279 391h25"/>
              <path d="M446 340h52v103h-52zM446 372h52"/>
            </g>
            <path d="M263 305.500h18l17 66M256 391.500h106M304.500 391v7M304.500 405v45M431 391.500h32M469 391.500h7M482 391.500h31M447 344l4-4M447 366l27-26M468 372l30-30M490 372l8-8" fill="none" stroke="#000"/>
            <path d="M336 321l12 1 23 4.500-23 5.500-12 1zM206 385l12 1 23 5-23 5.500-12 1zM291.500 357l5-2 3 17z" fill="#000"/>
            <path d="M302 368v-4l2.500-3 2.500 3v4zM312 388l8 3.500-8 3.500zM444 368v-4l2.500-3 2.500 3v4z" fill="#0000f0"/>
            <path d="M446.500 360v31" stroke="#0000f0" stroke-width="2"/>
            <path d="M301 388l7 7M308 388l-7 7M443 388l7 7M450 388l-7 7M441 391.500h11" stroke="#0000f0"/>
            <g stroke="#4da3f5" fill="#4da3f5">
              <path d="M507 371.500h58M513 391.500h52M550.500 327v44M550.500 391v32M551 327.500h15" fill="none"/>
              <path d="M548.500 355h4l-1.500 16h-1zM549.500 392h1l2 16h-4z"/>
            </g>
            <g fill="#4da3f5" stroke="#000">
              <circle cx="550.500" cy="327.500" r="3"/><circle cx="550.500" cy="354.500" r="3"/><circle cx="550.500" cy="408.500" r="3"/>
              <path d="M565.500 323.500l6 4-6 4z"/>
              <path d="M501.500 368.500h6v6h-6zM563.500 368.500h6v6h-6zM507.500 388.500h6v6h-6zM563.500 388.500h6v6h-6z"/>
              <path d="M550 327.500h3M550 354.500h3M550 408.500h3"/>
            </g>
            <g fill="none" stroke="#000"><circle cx="190.500" cy="305.500" r="7"/><path d="M186 315l9-19"/></g>
            <text class="thin" x="203" y="314">15.00</text>
            <text class="thin blue" x="574" y="336">7.50</text>
            <text class="mark" x="376" y="334">A</text>
            <text class="cap cjk" x="404" y="496">剖面</text>
            <text class="cap" x="479" y="496">A-A</text>
            <path d="M429.500 288.500h190v151h-190z" fill="none" stroke="#f00" stroke-width="3"/>
            <path d="M384 198l38 55" stroke="#f00" stroke-width="3"/><path d="M431 266l-14-11 12-7z" fill="#f00" stroke="#f00"/>
          </svg>

          <div class="viewbar">
            <button aria-label="整屏显示"><svg class="ic"><use href="#v-fit"/></svg></button>
            <button aria-label="局部放大"><svg class="ic"><use href="#v-area"/></svg></button>
            <button aria-label="上一视图"><svg class="ic"><use href="#v-prev"/></svg></button>
            <button aria-label="重画"><svg class="ic"><use href="#v-redraw"/></svg></button>
            <button aria-label="三维视图"><svg class="ic"><use href="#v-3d"/></svg></button>
            <button class="drop" aria-label="显示样式"><svg class="ic"><use href="#v-cube"/></svg><i class="caret"></i></button>
            <button class="drop" aria-label="隐藏显示"><svg class="ic"><use href="#v-eye"/></svg><i class="caret"></i></button>
            <button aria-label="外观"><svg class="ic"><use href="#v-ball"/></svg></button>
          </div>

          <div class="taskpane">
            <button class="on" aria-label="资源"><svg class="ic"><use href="#t-house"/></svg></button>
            <button aria-label="设计库"><svg class="ic"><use href="#t-books"/></svg></button>
            <button aria-label="文件探索器"><svg class="ic"><use href="#t-folder"/></svg></button>
            <button aria-label="视图调色板"><svg class="ic"><use href="#t-view"/></svg></button>
            <button aria-label="外观库"><svg class="ic"><use href="#t-ball"/></svg></button>
            <button aria-label="自定义属性"><svg class="ic"><use href="#p-prop"/></svg></button>
          </div>
        </div>
      </div>

      <div class="sheets">
        <div class="nav"><button aria-label="首页"><i class="bar-mark"></i><i class="tri l"></i></button><button aria-label="上一页"><i class="tri l"></i></button><button aria-label="下一页"><i class="tri"></i></button><button aria-label="末页"><i class="tri"></i><i class="bar-mark"></i></button></div>
        <button class="sheet"><svg><use href="#q-sheet"/></svg>Sheet1</button>
        <button class="new" aria-label="添加图纸"><svg><use href="#q-new"/></svg></button>
      </div>
    </div>

    <div class="sketchbar">
      <div class="hdots"></div>
      <button aria-label="草图绘制"><svg class="ic"><use href="#r-sketch"/></svg><i class="caret"></i></button>
      <button aria-label="智能尺寸"><svg class="ic"><use href="#i-dim"/></svg><i class="caret"></i></button>
      <hr>
      <button aria-label="直线"><svg class="ic"><use href="#r-line"/></svg><i class="caret"></i></button>
      <button aria-label="矩形"><svg class="ic"><use href="#r-rect"/></svg><i class="caret"></i></button>
      <button aria-label="槽口"><svg class="ic"><use href="#r-slot"/></svg><i class="caret"></i></button>
      <button aria-label="圆"><svg class="ic"><use href="#r-circ"/></svg><i class="caret"></i></button>
      <button aria-label="圆弧"><svg class="ic"><use href="#r-arc"/></svg><i class="caret"></i></button>
      <button aria-label="样条"><svg class="ic"><use href="#r-spl"/></svg><i class="caret"></i></button>
      <button aria-label="椭圆"><svg class="ic"><use href="#r-ell"/></svg><i class="caret"></i></button>
      <button aria-label="圆角"><svg class="ic"><use href="#r-fil"/></svg><i class="caret"></i></button>
      <button aria-label="多边形"><svg class="ic"><use href="#r-poly"/></svg></button>
      <button aria-label="点"><svg class="ic"><use href="#i-star"/></svg></button>
      <button aria-label="基准面"><svg class="ic"><use href="#r-grid"/></svg></button>
      <button aria-label="文字"><svg class="ic"><use href="#r-text"/></svg></button>
      <hr>
      <button aria-label="剪裁"><svg class="ic"><use href="#r-trim"/></svg><i class="caret"></i></button>
      <button aria-label="转换实体"><svg class="ic"><use href="#r-conv"/></svg><i class="caret"></i></button>
      <button aria-label="等距"><svg class="ic"><use href="#r-off"/></svg></button>
      <button aria-label="镜向"><svg class="ic"><use href="#r-mir"/></svg></button>
      <button aria-label="阵列"><svg class="ic"><use href="#r-pat"/></svg><i class="caret"></i></button>
      <button class="center" aria-label="更多草图工具"><svg class="chev"><use href="#q-down"/></svg></button>
    </div>
  </main>

  <div class="bar linebar">
    <div class="vdots"></div>
    <div class="set">
      <button aria-label="图层属性"><svg class="ic"><use href="#l-edit"/></svg></button>
      <button aria-label="图层"><svg class="ic"><use href="#l-stack"/></svg></button>
      <button aria-label="线色"><svg class="ic"><use href="#l-color"/></svg></button>
      <button aria-label="线粗"><svg class="ic"><use href="#l-width"/></svg></button>
      <button aria-label="线型"><svg class="ic"><use href="#l-style"/></svg></button>
      <button aria-label="隐藏边线"><svg class="ic"><use href="#l-hide"/></svg></button>
      <button aria-label="颜色显示"><svg class="ic"><use href="#l-disp"/></svg></button>
    </div>
  </div>

  <div class="bar filterbar">
    <div class="vdots"></div>
    <div class="set">
      <button aria-label="切换过滤器"><svg class="ic"><use href="#g-f1"/></svg></button>
      <button aria-label="清除过滤器"><svg class="ic"><use href="#g-f2"/></svg></button>
      <button aria-label="全部过滤器"><svg class="ic"><use href="#g-f3"/></svg></button>
    </div>
    <div class="selbox"><button class="on" aria-label="选择"><svg class="ic"><use href="#g-cur"/></svg></button><button class="dd" aria-label="选择方式"><i class="caret"></i></button></div>
    <button class="multi" aria-label="逆选"><svg class="ic wide"><use href="#g-cur2"/></svg></button>
    <div class="set filters">
      <button aria-label="顶点"><svg class="ic"><use href="#f1"/><use href="#funnel"/></svg></button>
      <button aria-label="边线"><svg class="ic"><use href="#f2"/><use href="#funnel"/></svg></button>
      <button aria-label="面"><svg class="ic"><use href="#f3"/><use href="#funnel"/></svg></button>
      <button aria-label="曲面"><svg class="ic"><use href="#f4"/><use href="#funnel"/></svg></button>
      <button aria-label="实体"><svg class="ic"><use href="#f5"/><use href="#funnel"/></svg></button>
      <button aria-label="基准轴"><svg class="ic"><use href="#f6"/><use href="#funnel"/></svg></button>
      <button aria-label="平面"><svg class="ic"><use href="#f7"/><use href="#funnel"/></svg></button>
      <button aria-label="草图点"><svg class="ic"><use href="#f8"/><use href="#funnel"/></svg></button>
      <button aria-label="草图"><svg class="ic"><use href="#f9"/><use href="#funnel"/></svg></button>
      <button aria-label="草图线段"><svg class="ic"><use href="#f10"/><use href="#funnel"/></svg></button>
      <button aria-label="中点"><svg class="ic"><use href="#f11"/><use href="#funnel"/></svg></button>
      <button aria-label="中心符号"><svg class="ic"><use href="#f12"/><use href="#funnel"/></svg></button>
      <button aria-label="中心线"><svg class="ic"><use href="#f13"/><use href="#funnel"/></svg></button>
      <button aria-label="尺寸过滤"><svg class="ic"><use href="#f14"/><use href="#funnel"/></svg></button>
      <button aria-label="粗糙度过滤"><svg class="ic"><use href="#f15"/><use href="#funnel"/></svg></button>
      <button aria-label="公差过滤"><svg class="ic"><use href="#f16"/><use href="#funnel"/></svg></button>
      <button aria-label="注释过滤"><svg class="ic"><use href="#f17"/><use href="#funnel"/></svg></button>
      <button aria-label="基准过滤"><svg class="ic"><use href="#f18"/><use href="#funnel"/></svg></button>
      <button aria-label="焊接过滤"><svg class="ic"><use href="#f19"/><use href="#funnel"/></svg></button>
      <button aria-label="焊缝过滤"><svg class="ic"><use href="#f20"/><use href="#funnel"/></svg></button>
      <button aria-label="目标过滤"><svg class="ic"><use href="#f21"/><use href="#funnel"/></svg></button>
      <button aria-label="装饰线过滤"><svg class="ic"><use href="#f22"/><use href="#funnel"/></svg></button>
    </div>
    <button class="fmore" aria-label="更多过滤器"><svg><use href="#q-more"/></svg></button>
  </div>

  <footer class="status">
    <span class="s-app">Solid</span>
    <span class="s-x">102.943mm</span>
    <span class="s-y">195.84mm</span>
    <span class="s-z">0mm</span>
    <span class="s-def">完全定义</span>
    <span class="s-edit">在编辑 剖面视图 A-A</span>
    <span class="s-scale">1 : 2</span>
    <span class="s-unit">MMGS</span>
    <i class="caret up"></i>
    <button class="s-help" aria-label="快速提示"><svg><use href="#q-help"/></svg></button>
    <button class="s-tag" aria-label="标签"><svg class="ic"><use href="#q-tag"/></svg></button>
    <span class="resize"></span>
  </footer>
</div>
</body>
</html>
```

FILE: styles.css
```css
:root {
  --face: #d7dade;
  --dark: #a9abae;
  --light: #e3e6eb;
  --ink: #111;
}

* { box-sizing: border-box; }

html, body { height: 100%; }

body {
  margin: 0;
  background: #3f7fd0;
  color: var(--ink);
  font: 12px/17px "Open Sans", "Noto Sans CJK SC", sans-serif;
}

button {
  margin: 0;
  padding: 0;
  border: 0;
  background: none;
  color: inherit;
  font: inherit;
  white-space: nowrap;
}

svg { display: block; flex: none; }

.sprite { position: absolute; width: 0; height: 0; }
.ic { width: 16px; height: 16px; }
.ic.wide { width: 18px; }
.wi { width: 14px; height: 14px; }
.wi.big-wi { width: 16px; }

.caret {
  flex: none;
  width: 0;
  height: 0;
  border: 3px solid transparent;
  border-top-color: #333;
  border-bottom-width: 0;
}
.caret.up { border-width: 0 3px 3px; border-bottom-color: #333; }

.window {
  display: flex;
  flex-direction: column;
  height: 100%;
  min-height: 640px;
  padding: 7px 7px 2px;
  border: 1px solid #474a5e;
  border-top-width: 2px;
  border-radius: 7px 7px 3px 3px;
  background: linear-gradient(#e6e7f2, #d8daea 30%, #d5d7e8);
  overflow: hidden;
}

/* Title bar */
.titlebar {
  display: flex;
  flex: none;
  height: 28px;
  border-bottom: 1px solid #111;
  background: #dfe2e8;
}
.brand {
  display: flex;
  flex: none;
  align-items: center;
  gap: 6px;
  width: 131px;
  padding-left: 4px;
  border-left: 5px solid #dd2a1b;
  background: linear-gradient(#3c454c, #191e22);
  color: #f4f4f4;
}
.ds { width: 22px; height: 20px; }
.brand-name {
  font: italic 500 14px/20px "Lato", sans-serif;
}
.brand-name b { font-weight: 900; }
.menu {
  display: flex;
  align-items: center;
  gap: 15px;
  padding-left: 18px;
  background: var(--dark);
  border-right: 1px solid #777;
}
.menu .pin { margin: 0 3px 0 -4px; }
.winbtns {
  display: flex;
  flex: 1;
  align-items: center;
  justify-content: flex-end;
  gap: 9px;
  padding-right: 5px;
  color: #474d5e;
}

/* Ribbon */
.ribbon {
  display: flex;
  flex: none;
  height: 76px;
  padding: 4px 0 6px 4px;
  border-bottom: 1px solid #111;
  background: linear-gradient(#dadde1, var(--face));
}
.rgroup {
  display: flex;
  padding-right: 1px;
  margin-right: 3px;
  border-right: 1px solid #77797c;
}
.rgroup.last { border-right: 0; }
.big {
  display: flex;
  flex-direction: column;
  align-items: center;
  width: 45px;
  padding-top: 3px;
  padding-bottom: 3px;
  white-space: normal;
}
.big span { width: 38px; line-height: 13px; }
.big.mid { padding-top: 10px; }
.big .caret { margin-top: auto; }
.big.slim { width: 33px; }
.big.tiny { width: 22px; }
.big.tiny span, .big.mid.slim span { width: auto; }
.rlist {
  display: flex;
  flex-direction: column;
  justify-content: space-between;
  padding-left: 4px;
}
.rlist.second { padding-left: 13px; padding-right: 10px; }
.rlist button {
  display: flex;
  align-items: center;
  gap: 6px;
  height: 19px;
}
.rgroup > .rlist:only-child { padding-left: 1px; padding-right: 8px; }
.rmore { margin-left: auto; padding-right: 2px; }
.rmore svg, .fmore svg { width: 10px; height: 8px; }

/* Work area */
.main { display: flex; flex: 1; min-height: 0; }
.work { display: flex; flex: 1; flex-direction: column; min-width: 0; }

.tabstrip {
  display: flex;
  flex: none;
  justify-content: space-between;
  height: 22px;
  background: linear-gradient(90deg, var(--face) 172px, #fff 172px);
}
.tabs { display: flex; }
.tabs button {
  height: 20px;
  padding: 0 7px;
  border: 1px solid #222;
  border-width: 0 2px 2px 0;
  background: var(--dark);
  line-height: 18px;
}
.tabs button:nth-child(3), .tabs button:nth-child(4) { padding: 0 15px; }
.tabs button.on { height: 22px; padding: 0 15px; background: var(--face); }
.docbtns {
  position: relative;
  z-index: 1;
  display: flex;
  gap: 9px;
  padding: 8px 11px 0 0;
  color: #70757f;
}

.stage { display: flex; flex: 1; min-height: 0; }

/* Property panel */
.panel {
  position: relative;
  display: flex;
  flex: none;
  flex-direction: column;
  width: 174px;
  border-right: 2px solid #222;
  background: var(--light);
}
.pm-rule {
  flex: none;
  height: 4px;
  margin-top: 1px;
  border: 1px solid #7e86a4;
  border-width: 1px 0;
  background: #cdd2e2;
}
.pm-tabs {
  display: flex;
  flex: none;
  height: 27px;
  padding: 5px 0 0 2px;
  border-bottom: 1px solid #111;
}
.pm-tabs button {
  display: grid;
  place-items: center;
  width: 28px;
  border: 1px solid #111;
  border-bottom: 0;
  background: var(--dark);
}
.pm-tabs .on { height: 22px; background: #eef0f4; }
.pm-title {
  display: flex;
  flex: none;
  align-items: center;
  gap: 5px;
  height: 24px;
  margin: 4px 5px 0 4px;
  padding: 0 6px 0 3px;
  border: 1px solid #111;
  background: var(--dark);
  font-size: 12px;
  font-weight: 500;
}
.pm-title button { margin-left: auto; color: #f2f2f2; font-size: 16px; font-weight: 800; }
.pm-ok { margin: 7px 0 0 6px; width: 16px; }
.pm-ok svg { width: 16px; height: 14px; }
.pm-sub {
  display: flex;
  flex: none;
  gap: 2px;
  height: 23px;
  margin-top: 16px;
  padding-left: 4px;
  border-bottom: 1px solid #111;
}
.pm-sub button {
  width: 34px;
  border: 1px solid #111;
  border-bottom: 0;
  background: var(--dark);
}
.pm-sub .on { height: 23px; background: #eef0f4; }
.pm-body {
  display: flex;
  flex: 1;
  min-height: 0;
  margin: 16px 4px 0 5px;
}
.pm-view { flex: 1; min-width: 0; overflow: hidden; }
.grp { border-left: 1px solid #111; border-bottom: 1px solid #111; background: var(--face); }
.grp.first {
  display: flex;
  flex-direction: column;
  align-items: flex-start;
  gap: 9px;
  height: 78px;
  margin-top: -12px;
  padding-left: 38px;
}
.grp input[type="text"] {
  height: 23px;
  padding: 0 3px;
  border: 2px solid #a6a8ab;
  background: var(--face);
  color: #777;
  font: 11px/17px "Open Sans", "Noto Sans CJK SC", sans-serif;
}
.grp input.name { width: 140px; height: 20px; border: 0; background: #fff; color: #222; }
.spin { display: flex; gap: 3px; }
.spin input { width: 91px; }
.steps { display: flex; flex-direction: column; width: 18px; border: 1px solid #c3c5c8; background: #eceef0; }
.steps button { display: grid; flex: 1; place-items: center; }
.steps .caret { opacity: .6; }
.check { display: flex; align-items: center; gap: 4px; height: 17px; white-space: nowrap; }
.check input {
  width: 12px;
  height: 12px;
  margin: 0;
  border: 1px solid #85878a;
  background: #eef0f2;
  box-shadow: inset 0 0 0 1px #fff, inset 0 0 0 2px #c3c6ca;
  appearance: none;
}
.grp.second { margin-top: 12px; width: 166px; }
.grp h3 {
  display: flex;
  align-items: center;
  gap: 51px;
  height: 20px;
  margin: 0;
  padding-left: 3px;
  border: 1px solid #111;
  border-left: 0;
  background: var(--dark);
  font-size: 12px;
  font-weight: 500;
}
.grp h3 svg { width: 8px; height: 10px; transform: rotate(180deg); }
.tools { display: flex; flex-direction: column; gap: 2px; padding: 3px 0 2px 3px; }
.row { display: flex; gap: 2px; }
.row button {
  display: grid;
  flex: none;
  place-items: center;
  width: 24px;
  height: 24px;
  border: 1px solid #8d9094;
  background: #dfe2e6;
}
.row button.on { border: 2px solid #6a6c70; background: #b2b4b7; }
.row button.apart { margin-left: 19px; }
.row button.text {
  width: 48px;
  height: 21px;
  border-radius: 3px;
  background: linear-gradient(#f4f4f4, #dcdcdc);
}
.row.lastrow { margin-top: 6px; align-items: center; }
.tools textarea {
  width: 160px;
  height: 65px;
  margin: 6px 0;
  padding: 0 1px;
  border: 1px solid #a6a8ab;
  background: #fff;
  color: #111;
  font: 9px/11px "Liberation Sans", sans-serif;
  resize: none;
  overflow: hidden;
}
.scroll {
  display: flex;
  flex: none;
  flex-direction: column;
  align-items: center;
  width: 16px;
  padding: 7px 0;
  background: #efefef;
}
.thumb {
  flex: 0 1 166px;
  width: 14px;
  margin: 92px 0 auto;
  border: 1px solid #8f9194;
  border-radius: 2px;
  background:
    repeating-linear-gradient(#777 0 1px, transparent 1px 3px) center / 7px 8px no-repeat,
    linear-gradient(90deg, #fafafa, #c8cacd);
}
.grip {
  position: absolute;
  top: 197px;
  left: 172px;
  z-index: 1;
  display: flex;
  flex-direction: column;
  align-items: center;
  justify-content: space-evenly;
  width: 9px;
  height: 39px;
  border: 1px solid #222;
  border-left: 0;
  background: var(--light);
}
.grip i { border: 2px solid transparent; border-right: 3px solid #222; border-left: 0; }

/* Drawing */
.canvas { position: relative; flex: 1; min-width: 0; background: #fff; overflow: hidden; }
.thin { font: 300 21px "Lato", sans-serif; }
.thin.blue { fill: #4da3f5; }
.mark, .cap { font: 700 31px "Lato", sans-serif; }
.cap.cjk { font: 500 31px "Noto Sans CJK SC", sans-serif; }
.viewbar {
  position: absolute;
  top: 6px;
  left: 126px;
  display: flex;
  gap: 7px;
}
.viewbar .drop { display: flex; align-items: center; gap: 7px; }
.viewbar .caret { border-top-color: #777; }
.taskpane {
  position: absolute;
  top: 38px;
  right: 0;
  width: 23px;
  border-left: 1px solid #111;
}
.taskpane button {
  display: grid;
  place-items: center;
  width: 100%;
  height: 24px;
  border: 1px solid #222;
  border-width: 1px 0;
  background: var(--dark);
}
.taskpane .on { background: #f0f0f2; }

/* Sheet tabs */
.sheets { display: flex; flex: none; height: 15px; border-top: 1px solid #111; background: var(--light); }
.nav { display: flex; width: 65px; background: var(--dark); }
.nav button { display: flex; flex: 1; align-items: center; justify-content: center; border: 1px solid #999; border-width: 0 1px 1px 0; }
.tri { border: 4px solid transparent; border-left: 5px solid #88898c; border-right: 0; }
.tri.l { border-left: 0; border-right: 5px solid #88898c; }
.bar-mark { width: 2px; height: 8px; background: #88898c; }
.sheet {
  display: flex;
  align-items: center;
  justify-content: center;
  gap: 2px;
  width: 73px;
  border: 1px solid #111;
  border-top: 0;
  background: var(--light);
}
.sheet svg { width: 14px; height: 12px; }
.new { display: grid; place-items: center; width: 33px; border: 1px solid #111; border-width: 0 1px 1px 0; background: var(--dark); }
.new svg { width: 16px; height: 13px; }

/* Sketch toolbar */
.sketchbar {
  display: flex;
  flex: none;
  flex-direction: column;
  width: 47px;
  padding: 5px 3px 0 6px;
  border-left: 1px solid #9a9ca0;
  background: var(--face);
}
.hdots { flex: none; height: 2px; margin-bottom: 8px; background: repeating-linear-gradient(90deg, #333 0 2px, transparent 2px 4px); }
.sketchbar button {
  display: flex;
  flex: 0 1 23px;
  align-items: center;
  gap: 11px;
}
.sketchbar hr { width: 100%; height: 1px; margin: 3px 0; border: 0; background: #77797c; }
.sketchbar .center { justify-content: center; flex-basis: 16px; padding-right: 4px; }
.chev { width: 8px; height: 10px; }

/* Bottom toolbars */
.bar { display: flex; flex: none; align-items: center; background: var(--face); }
.linebar, .filterbar { height: 30px; padding-left: 4px; }
.filterbar { border: 1px solid #909295; border-left: 0; }
.vdots { width: 2px; height: 22px; background: repeating-linear-gradient(#333 0 2px, transparent 2px 4px); }
.set { display: flex; gap: 7px; }
.linebar .set { align-items: center; height: 100%; padding: 0 10px; border-right: 1px solid #8d9094; }
.filterbar .set { padding-left: 9px; }
.selbox { display: flex; width: 40px; height: 23px; margin-left: 4px; border: 1px solid #77797c; }
.selbox .on { display: grid; place-items: center; width: 26px; border-right: 1px solid #77797c; background: #b2b4b7; }
.selbox .dd { display: grid; flex: 1; place-items: center; }
.multi { padding: 0 4px 0 3px; border-right: 1px solid #77797c; }
.fmore { margin-left: 8px; }

/* Status bar */
.status {
  display: flex;
  flex: none;
  align-items: center;
  height: 24px;
  margin-top: 1px;
  padding-left: 2px;
  border-top: 2px solid #222;
  background: var(--face);
  white-space: nowrap;
}
.s-app { width: 39px; }
.s-x { width: 95px; }
.s-y { width: 80px; }
.s-z { width: 32px; }
.s-def { width: 66px; }
.s-edit { width: 124px; }
.s-scale { width: 65px; }
.s-unit { width: 54px; }
.s-help { margin-left: 17px; }
.s-help svg { width: 14px; height: 14px; }
.s-tag { margin-left: auto; }
.resize {
  width: 10px;
  height: 10px;
  margin: 6px 2px 0 12px;
  background: radial-gradient(#999 1px, transparent 1px) 0 0 / 4px 4px;
  clip-path: polygon(100% 0, 100% 100%, 0 100%);
}
```
